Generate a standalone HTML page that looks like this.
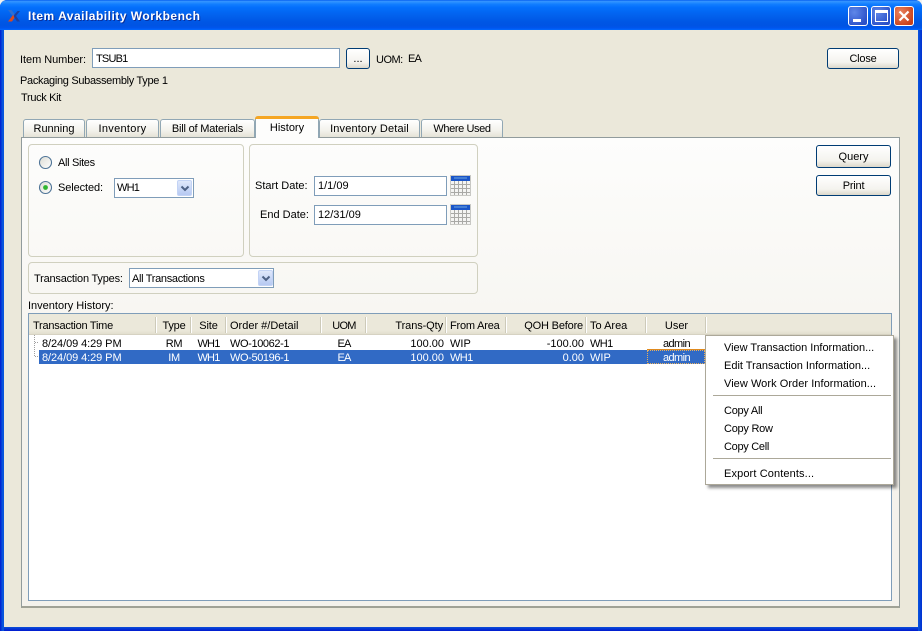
<!DOCTYPE html>
<html><head><meta charset="utf-8"><title>Item Availability Workbench</title>
<style>
html,body{margin:0;padding:0;width:922px;height:631px;overflow:hidden;background:#f2f2f0}
*{box-sizing:border-box}
#w{position:relative;width:922px;height:631px;overflow:hidden;font:11px/14px "Liberation Sans",sans-serif;color:#000}
.a,.t{position:absolute}
.t{white-space:nowrap;line-height:14px}
.r{text-align:right}.c{text-align:center}
.inp{position:absolute;background:#fff;border:1px solid #7f9db9}
.btn{position:absolute;border:1px solid #003c74;border-radius:3px;background:linear-gradient(#fff,#f4f3ee 70%,#dcd8ca);text-align:center;line-height:20px}
.tab{position:absolute;top:119px;height:18px;border:1px solid #91a7b4;border-bottom:0;border-radius:3px 3px 0 0;background:linear-gradient(#fff,#f3f2ec 60%,#e4e2d6);text-align:center;line-height:18px}
.grp{position:absolute;border:1px solid #d0d0bf;border-radius:4px}
.sep{position:absolute;top:317px;width:2px;height:16px;border-left:1px solid #cdcab9;border-right:1px solid #fff}
.arrow{position:absolute;width:15px;height:16px;border-radius:2px;background:linear-gradient(#dfe8fb,#b6c9f2);border:1px solid #c3d3f5}
.wb{position:absolute;top:6px;width:20px;height:20px;border:1px solid #fff;border-radius:3px;background:radial-gradient(circle at 30% 30%,#5f87e8,#2a50c8 80%)}
.ms{position:absolute;left:713px;width:178px;height:2px;border-top:1px solid #aca899;border-bottom:1px solid #fff}
</style></head><body><div id="w">
<!-- window frame -->
<div class="a" style="left:0;top:0;width:922px;height:631px;border-radius:7px 7px 0 0;background:linear-gradient(90deg,#0831d9 0,#0855dd 2px,#0855dd 3px,#0855dd 4px,#0855dd 918px,#0831d9 921px)"></div>
<div class="a" style="left:0;top:0;width:922px;height:30px;border-radius:7px 7px 0 0;background:linear-gradient(#0058ee 0,#3593ff 4%,#288eff 8%,#127dff 14%,#036ffc 25%,#0262ee 50%,#0057e5 72%,#0054e3 85%,#0055eb 92%,#005bf5 96%,#026afe 100%)"></div>
<div class="a" style="left:0;top:30px;width:4px;height:601px;background:linear-gradient(90deg,#0019cf,#0855dd 60%,#0855dd)"></div>
<div class="a" style="left:918px;top:30px;width:4px;height:601px;background:linear-gradient(90deg,#0855dd,#0030d0)"></div>
<div class="a" style="left:4px;top:627px;width:914px;height:4px;background:linear-gradient(#0a4fd8,#0019cf)"></div>
<div class="a" style="left:4px;top:30px;width:914px;height:597px;background:#ebe8da"></div>
<!-- logo -->
<svg class="a" style="left:8px;top:10px" width="13" height="12" viewBox="0 0 13 12"><path d="M0 0h3.500L7 4.500 5 6.500z" fill="#2f6fd0"/><path d="M0 11.500L5 5l1.800 2.200L4 11.500z" fill="#dc4a1c"/><path d="M6 5L9.500 1H12L8 6l4 5.500H9L6 7z" fill="#1d3f9e"/></svg>
<div class="t" style="left:28px;top:9px;font-size:12px;font-weight:bold;color:#fff;text-shadow:1px 1px 0 #0a2f9a;letter-spacing:.5px">Item Availability Workbench</div>
<!-- window buttons -->
<div class="wb" style="left:848px"><div class="a" style="left:4px;top:12px;width:8px;height:3px;background:#fff"></div></div>
<div class="wb" style="left:871px"><div class="a" style="left:3px;top:3px;width:13px;height:12px;border:1px solid #fff;border-top-width:3px"></div></div>
<div class="wb" style="left:894px;background:radial-gradient(circle at 30% 30%,#e9825f,#c8401a 80%)"><svg class="a" style="left:3px;top:3px" width="12" height="12" viewBox="0 0 12 12"><path d="M1.500 1.500l9 9M10.500 1.500l-9 9" stroke="#fff" stroke-width="2.200" fill="none"/></svg></div>
<!-- item number row -->
<div class="t" style="left:20px;top:53px;letter-spacing:-.05px">Item Number:</div>
<div class="inp" style="left:92px;top:48px;width:248px;height:20px"></div>
<div class="t" style="left:96px;top:52px;letter-spacing:-.8px">TSUB1</div>
<div class="btn" style="left:346px;top:48px;width:24px;height:21px">...</div>
<div class="t" style="left:376px;top:53px;letter-spacing:-.5px">UOM:</div>
<div class="t" style="left:408px;top:52px;letter-spacing:-.8px">EA</div>
<div class="btn" style="left:827px;top:48px;width:72px;height:21px;letter-spacing:-.2px">Close</div>
<div class="t" style="left:20px;top:74px;letter-spacing:-.31px">Packaging Subassembly Type 1</div>
<div class="t" style="left:21px;top:91px;letter-spacing:-.33px">Truck Kit</div>
<!-- tabs + pane -->
<div class="a" style="left:21px;top:137px;width:879px;height:471px;border:1px solid #919b9c;border-bottom:2px solid #a0a296;background:linear-gradient(#fdfdfc,#f4f2ec 60%,#f4f2ec)"></div>
<div class="tab" style="left:23px;width:62px">Running</div>
<div class="tab" style="left:86px;width:73px;letter-spacing:.3px">Inventory</div>
<div class="tab" style="left:160px;width:95px;letter-spacing:-.2px">Bill of Materials</div>
<div class="a" style="left:255px;top:116px;width:64px;height:22px;background:#fdfdfc;border:1px solid #91a7b4;border-bottom:0;border-top:0;border-radius:3px 3px 0 0;text-align:center;line-height:24px;z-index:2"><div class="a" style="left:-1px;top:0;width:64px;height:3px;background:#f5a623;border-radius:3px 3px 0 0"></div>History</div>
<div class="tab" style="left:319px;width:101px;letter-spacing:.15px">Inventory Detail</div>
<div class="tab" style="left:421px;width:82px;letter-spacing:-.4px">Where Used</div>
<!-- groups -->
<div class="grp" style="left:28px;top:144px;width:216px;height:113px"></div>
<div class="grp" style="left:249px;top:144px;width:229px;height:113px"></div>
<div class="grp" style="left:28px;top:262px;width:450px;height:32px"></div>
<!-- radios -->
<svg class="a" style="left:38px;top:155px" width="15" height="40" viewBox="0 0 15 40">
<defs><linearGradient id="rg" x1="0" y1="0" x2="1" y2="1"><stop offset="0" stop-color="#dcdcd4"/><stop offset="1" stop-color="#fff"/></linearGradient></defs>
<circle cx="7.500" cy="7.500" r="6" fill="url(#rg)" stroke="#4f7497" stroke-width="1.100"/>
<circle cx="7.500" cy="32.500" r="6" fill="url(#rg)" stroke="#4f7497" stroke-width="1.100"/>
<circle cx="7.500" cy="32.500" r="2.400" fill="#2fb52f"/></svg>
<div class="t" style="left:58px;top:156px;letter-spacing:-.33px">All Sites</div>
<div class="t" style="left:58px;top:181px;letter-spacing:-.1px">Selected:</div>
<div class="inp" style="left:114px;top:178px;width:80px;height:20px"></div>
<div class="t" style="left:117px;top:181px;letter-spacing:-.8px">WH1</div>
<div class="arrow" style="left:177px;top:180px"><svg class="a" style="left:2px;top:4px" width="10" height="7" viewBox="0 0 10 7"><path d="M1.500 1.500L5 5l3.500-3.500" stroke="#4d6185" stroke-width="2" fill="none"/></svg></div>
<!-- dates -->
<div class="t" style="left:255px;top:179px">Start Date:</div>
<div class="inp" style="left:314px;top:176px;width:133px;height:20px"></div>
<div class="t" style="left:318px;top:179px">1/1/09</div>
<div class="t" style="left:260px;top:208px">End Date:</div>
<div class="inp" style="left:314px;top:205px;width:133px;height:20px"></div>
<div class="t" style="left:318px;top:208px">12/31/09</div>
<svg class="a" style="left:450px;top:175px" width="21" height="51" viewBox="0 0 21 51">
<g><rect x=".5" y=".5" width="20" height="20" fill="#f4f4f2" stroke="#c8c8c4"/><rect x="1" y="1" width="19" height="5" fill="#1a55c8"/><rect x="4" y="2.500" width="13" height="1" fill="#6fa6e0"/><path d="M1 9.500h19M1 13.500h19M1 17.500h19M4.500 6v14M8.500 6v14M12.500 6v14M16.500 6v14" stroke="#a9a9a6" stroke-width="1" fill="none"/></g>
<g transform="translate(0,29)"><rect x=".5" y=".5" width="20" height="20" fill="#f4f4f2" stroke="#c8c8c4"/><rect x="1" y="1" width="19" height="5" fill="#1a55c8"/><rect x="4" y="2.500" width="13" height="1" fill="#6fa6e0"/><path d="M1 9.500h19M1 13.500h19M1 17.500h19M4.500 6v14M8.500 6v14M12.500 6v14M16.500 6v14" stroke="#a9a9a6" stroke-width="1" fill="none"/></g></svg>
<!-- transaction types -->
<div class="t" style="left:34px;top:272px;letter-spacing:-.2px">Transaction Types:</div>
<div class="inp" style="left:129px;top:268px;width:145px;height:20px"></div>
<div class="t" style="left:132px;top:272px;letter-spacing:-.32px">All Transactions</div>
<div class="arrow" style="left:258px;top:270px"><svg class="a" style="left:2px;top:4px" width="10" height="7" viewBox="0 0 10 7"><path d="M1.500 1.500L5 5l3.500-3.500" stroke="#4d6185" stroke-width="2" fill="none"/></svg></div>
<!-- query/print -->
<div class="btn" style="left:816px;top:145px;width:75px;height:23px;line-height:22px">Query</div>
<div class="btn" style="left:816px;top:175px;width:75px;height:21px;letter-spacing:-.2px">Print</div>
<!-- list -->
<div class="t" style="left:28px;top:299px">Inventory History:</div>
<div class="a" style="left:28px;top:313px;width:864px;height:288px;background:#fff;border:1px solid #7f9db9"></div>
<div class="a" style="left:29px;top:314px;width:862px;height:21px;background:linear-gradient(#ebe8da,#ebe8da 80%,#e2dfce);border-bottom:1px solid #d6d2c2"></div>
<div class="sep" style="left:155px"></div><div class="sep" style="left:190px"></div><div class="sep" style="left:225px"></div><div class="sep" style="left:320px"></div><div class="sep" style="left:365px"></div><div class="sep" style="left:445px"></div><div class="sep" style="left:505px"></div><div class="sep" style="left:585px"></div><div class="sep" style="left:645px"></div><div class="sep" style="left:705px"></div>
<div class="t" style="left:33px;top:319px;letter-spacing:-.25px">Transaction Time</div>
<div class="t c" style="left:157px;top:319px;width:34px;letter-spacing:-.2px">Type</div>
<div class="t c" style="left:192px;top:319px;width:33px;letter-spacing:-.1px">Site</div>
<div class="t" style="left:230px;top:319px">Order #/Detail</div>
<div class="t c" style="left:322px;top:319px;width:44px;letter-spacing:-.7px">UOM</div>
<div class="t r" style="left:366px;top:319px;width:77px;letter-spacing:-.1px">Trans-Qty</div>
<div class="t" style="left:450px;top:319px;letter-spacing:-.2px">From Area</div>
<div class="t r" style="left:506px;top:319px;width:77px;letter-spacing:-.18px">QOH Before</div>
<div class="t" style="left:590px;top:319px">To Area</div>
<div class="t c" style="left:647px;top:319px;width:59px">User</div>
<!-- rows -->
<svg class="a" style="left:30px;top:335px" width="10" height="24" viewBox="0 0 10 24"><path d="M4.500 0v22M5 7.500h4M5 21.500h4" stroke="#a0a0a0" stroke-dasharray="1 1" fill="none"/></svg>
<div class="a" style="left:39px;top:350px;width:666px;height:14px;background:#316ac5"></div>
<div class="a" style="left:647px;top:350px;width:58px;height:14px;border:1px dotted #e8b060"></div>
<div class="a" style="left:647px;top:349px;width:59px;height:1px;background:#e08a1e"></div>
<div class="a" style="left:705px;top:335px;width:1px;height:30px;background:#aab"></div>
<div class="t" style="left:42px;top:337px;letter-spacing:-.08px">8/24/09 4:29 PM</div>
<div class="t c" style="left:157px;top:337px;width:34px;letter-spacing:-.3px">RM</div>
<div class="t c" style="left:192px;top:337px;width:33px;letter-spacing:-.8px">WH1</div>
<div class="t" style="left:230px;top:337px;letter-spacing:-.38px">WO-10062-1</div>
<div class="t c" style="left:322px;top:337px;width:44px;letter-spacing:-.8px">EA</div>
<div class="t r" style="left:366px;top:337px;width:78px">100.00</div>
<div class="t" style="left:450px;top:337px">WIP</div>
<div class="t r" style="left:506px;top:337px;width:78px">-100.00</div>
<div class="t" style="left:590px;top:337px;letter-spacing:-.6px">WH1</div>
<div class="t c" style="left:647px;top:337px;width:59px;letter-spacing:-.6px">admin</div>
<div style="color:#fff">
<div class="t" style="left:42px;top:351px;letter-spacing:-.08px">8/24/09 4:29 PM</div>
<div class="t c" style="left:157px;top:351px;width:34px;letter-spacing:-.3px">IM</div>
<div class="t c" style="left:192px;top:351px;width:33px;letter-spacing:-.8px">WH1</div>
<div class="t" style="left:230px;top:351px;letter-spacing:-.38px">WO-50196-1</div>
<div class="t c" style="left:322px;top:351px;width:44px;letter-spacing:-.8px">EA</div>
<div class="t r" style="left:366px;top:351px;width:78px">100.00</div>
<div class="t" style="left:450px;top:351px;letter-spacing:-.6px">WH1</div>
<div class="t r" style="left:506px;top:351px;width:78px">0.00</div>
<div class="t" style="left:590px;top:351px">WIP</div>
<div class="t c" style="left:647px;top:351px;width:59px;letter-spacing:-.6px">admin</div>
</div>
<!-- context menu -->
<div class="a" style="left:705px;top:335px;width:189px;height:150px;background:#fff;border:1px solid #aca899;box-shadow:3px 3px 3px rgba(0,0,0,.45)"></div>
<div class="t" style="left:724px;top:341px;letter-spacing:-.02px">View Transaction Information...</div>
<div class="t" style="left:724px;top:359px">Edit Transaction Information...</div>
<div class="t" style="left:724px;top:377px;letter-spacing:.05px">View Work Order Information...</div>
<div class="ms" style="top:395px"></div>
<div class="t" style="left:724px;top:404px;letter-spacing:-.25px">Copy All</div>
<div class="t" style="left:724px;top:422px;letter-spacing:-.25px">Copy Row</div>
<div class="t" style="left:724px;top:440px;letter-spacing:-.3px">Copy Cell</div>
<div class="ms" style="top:458px"></div>
<div class="t" style="left:724px;top:467px;letter-spacing:.12px">Export Contents...</div>
</div></body></html>
